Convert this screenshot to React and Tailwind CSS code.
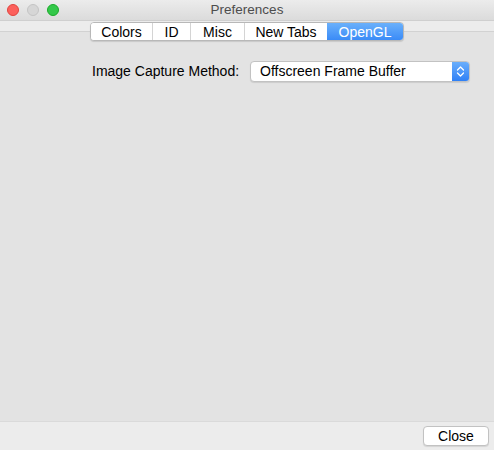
import React, { useState } from 'react';

const tabs = [
  { key: 'colors', label: 'Colors', w: 'w-[61px]' },
  { key: 'id', label: 'ID', w: 'w-[38px]' },
  { key: 'misc', label: 'Misc', w: 'w-[54px]' },
  { key: 'newtabs', label: 'New Tabs', w: 'w-[83px]' },
  { key: 'opengl', label: 'OpenGL', w: 'w-[76px]' }
];

function TrafficLights() {
  return (
    <div className="absolute left-[7px] top-[4px] flex gap-[8px]">
      <span className="block h-[12px] w-[12px] rounded-full border border-[#e0443e] bg-[#fc605c]" />
      <span className="block h-[12px] w-[12px] rounded-full border border-[#c4c4c4] bg-[#d6d6d6]" />
      <span className="block h-[12px] w-[12px] rounded-full border border-[#1aab29] bg-[#34c84a]" />
    </div>
  );
}

export default function App() {
  const [active, setActive] = useState('opengl');
  return (
    <div
      className="flex h-[450px] w-[494px] flex-col overflow-hidden bg-[#ececec] text-[14px] text-black"
      style={{ fontFamily: '"Liberation Sans", Arial, sans-serif' }}
    >
      {/* Title bar */}
      <div className="relative flex h-[21px] shrink-0 items-center justify-center border-b border-[#cfcfcf] bg-gradient-to-b from-[#ececec] to-[#dbdbdb]">
        <TrafficLights />
        <span className="text-[13.5px] text-[#4d4d4d]">Preferences</span>
      </div>

      {/* Tabs */}
      <div className="relative z-10 mt-[1px] flex justify-center">
        <div className="flex h-[19px] overflow-hidden rounded-[4px] border border-[#b8b8b8] bg-white shadow-[0_1px_1px_rgba(0,0,0,0.12)]">
          {tabs.map((t, i) => (
            <button
              key={t.key}
              type="button"
              onClick={() => setActive(t.key)}
              className={`flex ${t.w} items-center justify-center text-[14px] leading-none ${
                i > 0 && active !== t.key ? 'border-l border-[#d4d4d4]' : ''
              } ${
                active === t.key
                  ? 'bg-gradient-to-b from-[#6ab0fb] to-[#3a8bf7] text-white'
                  : 'bg-white text-black'
              }`}
            >
              {t.label}
            </button>
          ))}
        </div>
      </div>

      {/* Tab box */}
      <div className="-mt-[10px] flex-1 border-t border-[#d2d2d2] bg-[#e3e3e3]">
        <div className="flex items-center pl-[92px] pt-[29px]">
          <span className="w-[158px] text-[14px]">Image Capture Method:</span>
          <div className="flex h-[21px] w-[220px] overflow-hidden rounded-[4px] border border-[#c2c2c2] bg-white shadow-[0_1px_1px_rgba(0,0,0,0.1)]">
            <span className="flex flex-1 items-center pl-[9px]">Offscreen Frame Buffer</span>
            <span className="flex w-[17px] items-center justify-center bg-gradient-to-b from-[#6aaefb] to-[#2f80f6]">
              <svg width="9" height="13" viewBox="0 0 9 13" fill="none" stroke="white" strokeWidth="1.3" strokeLinecap="round" strokeLinejoin="round">
                <path d="M1.5 5L4.5 2L7.5 5" />
                <path d="M1.5 8L4.5 11L7.5 8" />
              </svg>
            </span>
          </div>
        </div>
      </div>

      {/* Bottom bar */}
      <div className="flex h-[29px] shrink-0 items-center justify-end border-t border-[#dadada] bg-[#ececec] pr-[5px]">
        <button
          type="button"
          className="flex h-[20px] w-[66px] items-center justify-center rounded-[4px] border border-[#c2c2c2] bg-white text-[14px] shadow-[0_1px_1px_rgba(0,0,0,0.1)]"
        >
          Close
        </button>
      </div>
    </div>
  );
}
